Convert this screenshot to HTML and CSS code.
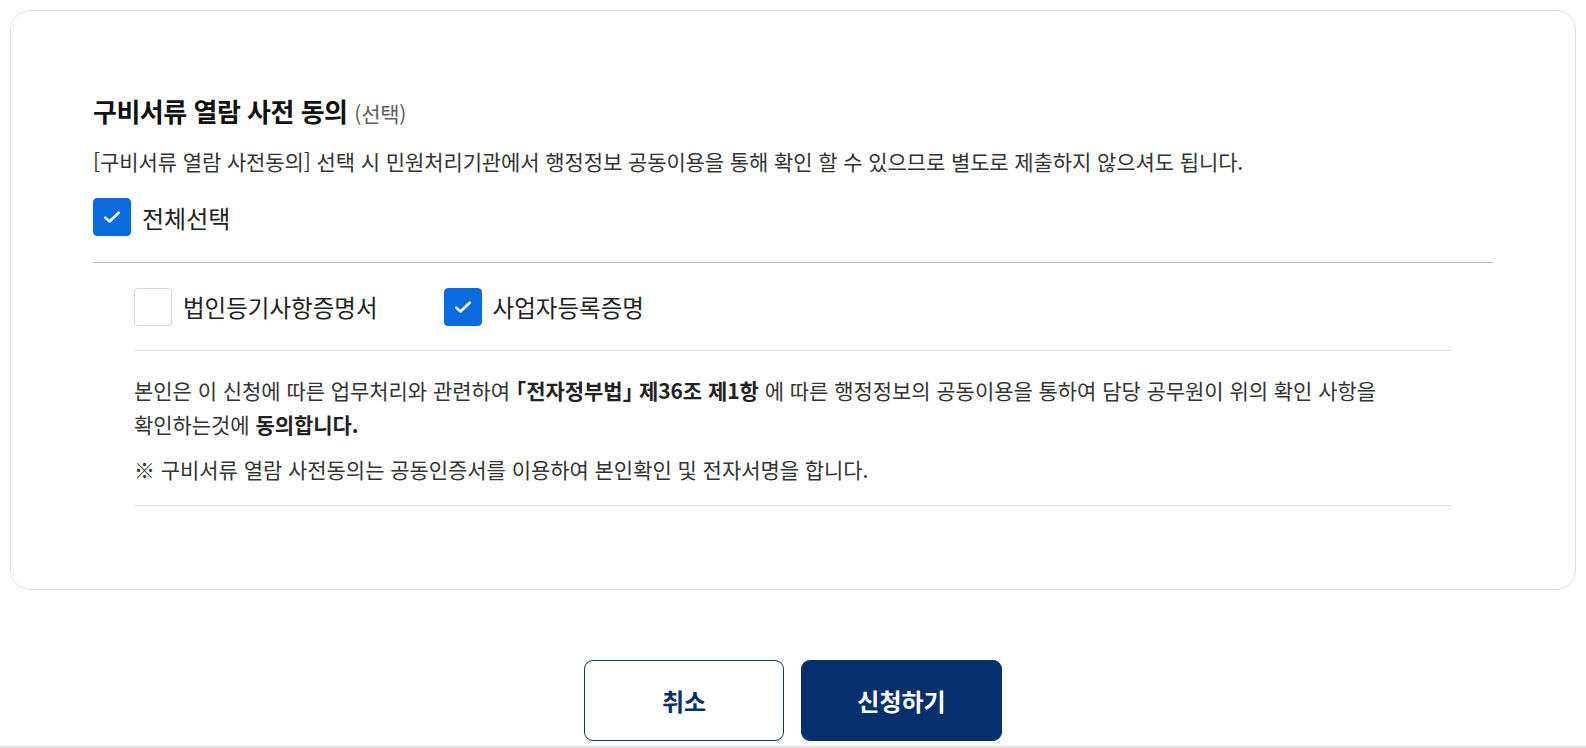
FILE: index.html
```html
<!DOCTYPE html>
<html lang="ko">
<head>
<meta charset="utf-8">
<title>구비서류 열람 사전 동의</title>
<link rel="stylesheet" href="styles.css">
</head>
<body>
<div class="page">
  <section class="card">
    <h2 class="title">구비서류 열람 사전 동의 <span class="opt">(선택)</span></h2>
    <p class="desc">[구비서류 열람 사전동의] 선택 시 민원처리기관에서 행정정보 공동이용을 통해 확인 할 수 있으므로 별도로 제출하지 않으셔도 됩니다.</p>
    <label class="check check-all">
      <span class="box on"><svg viewBox="0 0 22 22" width="22" height="22"><path d="M4.2 11.6l4.3 3.9 9.2-8.8" fill="none" stroke="#fff" stroke-width="2.6" stroke-linecap="round" stroke-linejoin="round"/></svg></span>
      <span class="label label-all">전체선택</span>
    </label>
    <div class="sub">
      <div class="items">
        <label class="check item">
          <span class="box"></span>
          <span class="label">법인등기사항증명서</span>
        </label>
        <label class="check item">
          <span class="box on"><svg viewBox="0 0 22 22" width="22" height="22"><path d="M4.2 11.6l4.3 3.9 9.2-8.8" fill="none" stroke="#fff" stroke-width="2.6" stroke-linecap="round" stroke-linejoin="round"/></svg></span>
          <span class="label">사업자등록증명</span>
        </label>
      </div>
      <div class="notice">
        <p class="agree">본인은 이 신청에 따른 업무처리와 관련하여 <b class="law">「전자정부법」 제36조 제1항</b> 에 따른 행정정보의 공동이용을 통하여 담당 공무원이 위의 확인 사항을<br>확인하는것에 <b>동의합니다.</b></p>
        <p class="note">※ 구비서류 열람 사전동의는 공동인증서를 이용하여 본인확인 및 전자서명을 합니다.</p>
      </div>
    </div>
  </section>
  <div class="actions">
    <button class="btn btn-line" type="button">취소</button>
    <button class="btn btn-fill" type="button">신청하기</button>
  </div>
</div>
<div class="foot"></div>
</body>
</html>
```
FILE: styles.css
```css
* { box-sizing: border-box; }
html, body { margin: 0; padding: 0; background: #fff; }
body {
  font-family: "Noto Sans CJK KR", "Noto Sans", sans-serif;
  color: #333;
}
.page { padding: 10px 10px 0; }
.card {
  border: 1px solid #d3ddf3;
  border-radius: 20px;
  padding: 82px 82px 82px;
  min-height: 580px;
}
.title {
  margin: 0;
  font-size: 26px;
  line-height: 36px;
  font-weight: 700;
  color: #111;
  letter-spacing: -0.5px;
}
.title .opt {
  font-size: 21px;
  font-weight: 400;
  color: #5f5f5f;
  letter-spacing: -0.3px;
}
.desc {
  margin: 15px 0 0;
  font-size: 21px;
  line-height: 30px;
  letter-spacing: -0.1px;
  color: #333;
}
.check {
  display: flex;
  align-items: center;
  gap: 11px;
  cursor: pointer;
}
.box {
  width: 38px;
  height: 38px;
  border-radius: 4px;
  border: 1px solid #d6d6d6;
  background: #fff;
  display: flex;
  align-items: center;
  justify-content: center;
  flex: none;
}
.box.on { background: #0a6be0; border-color: #0a6be0; }
.label {
  font-size: 23.5px;
  letter-spacing: 0;
  color: #222;
}
.label-all { font-size: 24px; }
.check-all {
  margin-top: 22px;
  padding-bottom: 26px;
  border-bottom: 1px solid #b9b9bd;
}
.sub { padding: 0 41px; }
.items {
  display: flex;
  gap: 66px;
  padding: 25px 0 24px;
  border-bottom: 1px solid #e3e3e6;
}
.notice {
  padding: 22px 0 19px;
  border-bottom: 1px solid #e3e3e6;
}
.agree, .note {
  margin: 0;
  font-size: 21px;
  line-height: 34px;
  letter-spacing: -0.05px;
  color: #333;
}
.agree b, .note b { color: #222; }
.law { font-feature-settings: "halt"; }
.note { margin-top: 11px; }
.actions {
  display: flex;
  justify-content: center;
  gap: 17px;
  padding: 70px 0 5px;
}
.btn {
  width: 200px;
  height: 81px;
  border-radius: 9px;
  font-family: inherit;
  font-size: 24px;
  font-weight: 700;
  letter-spacing: 0;
  cursor: pointer;
}
.btn-line { background: #fff; color: #062f6e; border: 1px solid #0b3374; }
.btn-fill { background: #062f6e; color: #fff; border: 1px solid #062f6e; width: 201px; }
.foot { border-top: 2px solid #e2e2e2; height: 10px; }
```
